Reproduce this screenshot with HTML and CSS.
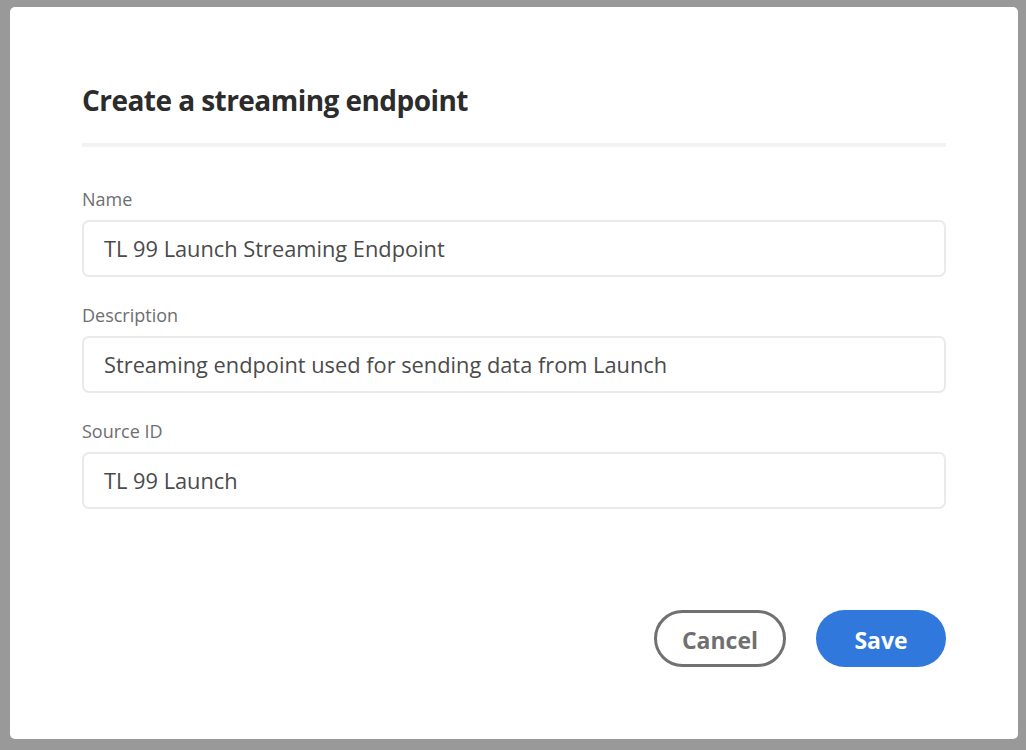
FILE: index.html
```html
<!DOCTYPE html>
<html lang="en">
<head>
<meta charset="utf-8">
<title>Create a streaming endpoint</title>
<link rel="stylesheet" href="styles.css">
</head>
<body>
  <div class="dialog">
    <div class="header">
      <h1 class="title">Create a streaming endpoint</h1>
    </div>
    <form class="form">
      <div class="field">
        <label class="label">Name</label>
        <div class="input">TL 99 Launch Streaming Endpoint</div>
      </div>
      <div class="field">
        <label class="label">Description</label>
        <div class="input">Streaming endpoint used for sending data from Launch</div>
      </div>
      <div class="field">
        <label class="label">Source ID</label>
        <div class="input">TL 99 Launch</div>
      </div>
    </form>
    <div class="footer">
      <button class="btn btn-cancel" type="button">Cancel</button>
      <button class="btn btn-save" type="button">Save</button>
    </div>
  </div>
</body>
</html>
```

FILE: styles.css
```css
html, body {
  margin: 0;
  height: 100%;
}
body {
  background: #999999;
  box-sizing: border-box;
  padding: 7px 8px 11px 10px;
  font-family: "Open Sans", "Noto Sans", sans-serif;
}
.dialog {
  box-sizing: border-box;
  width: 1008px;
  height: 732px;
  background: #ffffff;
  border-radius: 5px;
  padding: 75px 72px 72px 72px;
  display: flex;
  flex-direction: column;
}
.header {
  padding-bottom: 25px;
  border-bottom: 4px solid #f2f2f2;
}
.title {
  margin: 0;
  font-size: 28px;
  line-height: 36px;
  font-weight: 700;
  color: #2c2c2c;
  letter-spacing: -0.55px;
}
.form {
  display: flex;
  flex-direction: column;
  gap: 27px;
  margin-top: 41px;
}
.field {
  display: flex;
  flex-direction: column;
  gap: 10px;
}
.label {
  font-size: 18px;
  line-height: 22px;
  color: #6e6e6e;
}
.input {
  box-sizing: border-box;
  height: 57px;
  border: 2px solid #eaeaea;
  border-radius: 7px;
  padding: 0 20px;
  display: flex;
  align-items: center;
  font-size: 21.8px;
  color: #4b4b4b;
}
.footer {
  margin-top: auto;
  display: flex;
  justify-content: flex-end;
  gap: 30px;
}
.btn {
  box-sizing: border-box;
  height: 57px;
  border-radius: 29px;
  font-family: inherit;
  font-size: 23px;
  font-weight: 700;
  padding: 3px 0 0 0;
  cursor: pointer;
}
.btn-cancel {
  width: 132px;
  background: #ffffff;
  border: 3px solid #717171;
  color: #707070;
}
.btn-save {
  width: 130px;
  background: #3178dd;
  border: none;
  color: #ffffff;
}
```
